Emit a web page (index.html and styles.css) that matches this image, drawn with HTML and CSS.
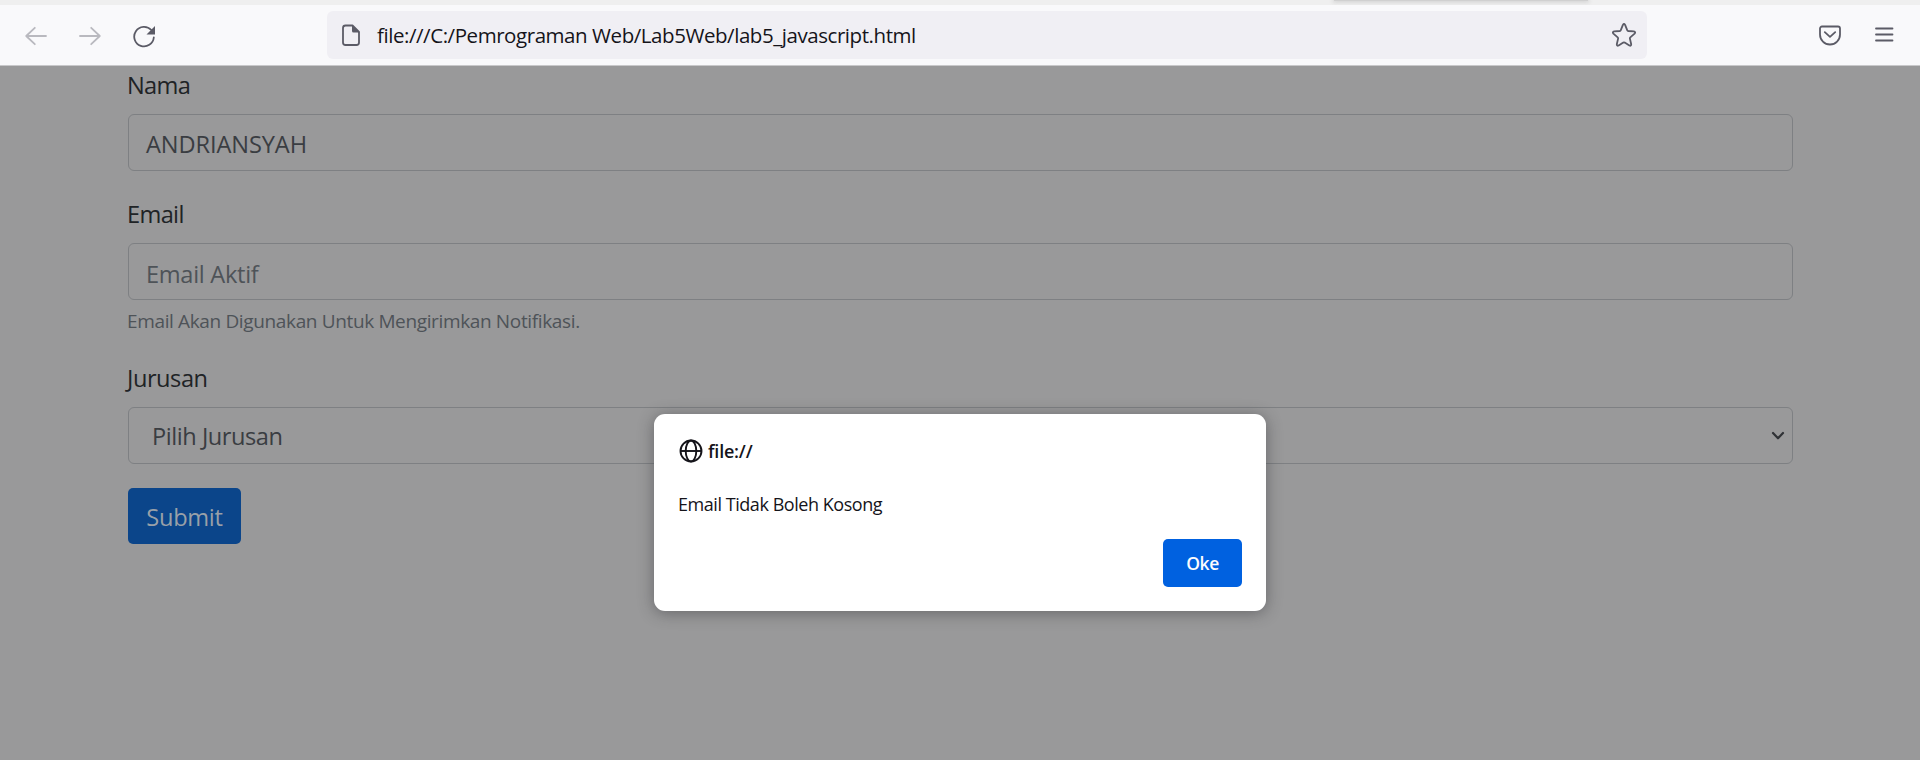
FILE: index.html
```html
<!DOCTYPE html>
<html lang="id">
<head>
<meta charset="utf-8">
<title>lab5_javascript</title>
<link rel="stylesheet" href="styles.css">
</head>
<body>
<header class="chrome">
  <div class="tabstrip"><div class="active-tab"></div></div>
  <nav class="toolbar">
    <div class="nav-buttons">
      <svg class="icon dim" viewBox="0 0 24 24"><path d="M22 12H2.500M10.800 3.800 2.200 12l8.600 8.200"/></svg>
      <svg class="icon dim" viewBox="0 0 24 24"><path d="M2 12h19.500M13.200 3.800 21.800 12l-8.600 8.200"/></svg>
      <svg class="icon" viewBox="0 0 24 24"><path d="M19.300 6A9.800 9.800 0 1 0 21.800 13.500"/><path class="solid" d="M23 2v8.500h-8.500z"/></svg>
    </div>
    <div class="urlbar">
      <svg class="icon" viewBox="0 0 24 24"><path d="M13.500 2.500H6.500a2.500 2.500 0 0 0-2.500 2.500v14.500A2.500 2.500 0 0 0 6.500 22h11a2.500 2.500 0 0 0 2.500-2.500V9z"/><path class="solid" d="M13 2v6a1.500 1.500 0 0 0 1.500 1.500H20.500z"/></svg>
      <span class="url">file:///C:/Pemrograman Web/Lab5Web/lab5_javascript.html</span>
      <svg class="icon" viewBox="0 0 24 24"><path d="M10.900 1.900Q12 .1 13.100 1.900L15.200 7.200Q15.500 7.900 16.300 8L21.800 8.400Q24 8.900 22.600 10.600L18.300 14.400Q17.800 14.900 17.900 15.600L19.200 21.300Q19.200 23.300 17.400 22.500L12.700 19.600Q12 19.200 11.300 19.600L6.600 22.500Q4.800 23.300 4.800 21.300L6.100 15.600Q6.200 14.900 5.700 14.400L1.400 10.600Q0 8.900 2.200 8.400L7.700 8Q8.500 7.900 8.800 7.200Z"/></svg>
    </div>
    <div class="actions">
      <svg class="icon" viewBox="0 0 24 24"><path d="M4 3.500h16a2 2 0 0 1 2 2v6a10 10 0 0 1-20 0v-6a2 2 0 0 1 2-2z"/><path d="m6.800 9.200 5.200 4.600 5.200-4.600"/></svg>
      <svg class="icon" viewBox="0 0 24 24"><path d="M4 5.500h16.500M4 11.500h16.500M4 17.500h16.500"/></svg>
    </div>
  </nav>
</header>
<main class="page">
  <form class="form">
    <div class="group">
      <label class="label tight">Nama</label>
      <div class="control value">ANDRIANSYAH</div>
    </div>
    <div class="group">
      <label class="label tight">Email</label>
      <div class="control placeholder">Email Aktif</div>
      <small class="hint">Email Akan Digunakan Untuk Mengirimkan Notifikasi.</small>
    </div>
    <div class="group">
      <label class="label">Jurusan</label>
      <div class="control select">
        <span>Pilih Jurusan</span>
        <svg class="chevron" viewBox="0 0 14 10"><path d="m2 2 5 5.300L12 2"/></svg>
      </div>
    </div>
    <button type="button" class="submit">Submit</button>
  </form>
</main>
<section class="dialog">
  <div class="origin">
    <svg class="globe" viewBox="0 0 24 24"><circle cx="12" cy="12" r="10.500"/><ellipse cx="12" cy="12" rx="5.300" ry="10.500"/><path d="M1.500 12h21"/></svg>
    <span>file://</span>
  </div>
  <p class="message">Email Tidak Boleh Kosong</p>
  <button type="button" class="ok">Oke</button>
</section>
</body>
</html>
```
FILE: styles.css
```css
* { box-sizing: border-box; }
body {
  margin: 0;
  height: 760px;
  overflow: hidden;
  background: #99999a;
  font-family: "Open Sans", "Noto Sans", sans-serif;
}
button { font-family: inherit; border: 0; padding: 0; }

/* Browser chrome */
.chrome { height: 66px; background: #f9f9fb; border-bottom: 1px solid #c8c8ca; }
.tabstrip { height: 5px; background: #efefef; overflow: hidden; padding-left: 1334px; }
.active-tab { width: 254px; height: 1px; background: #d0d0d0; box-shadow: 0 0 4px 1px #c8c8c8; }
.toolbar { display: flex; height: 60px; padding: 6px 24px 6px; }
.nav-buttons { display: flex; gap: 30px; width: 303px; padding-top: 13px; }
.icon { width: 24px; height: 24px; flex: none; fill: none; stroke: #5b5b66; stroke-width: 1.8; stroke-linecap: round; stroke-linejoin: round; }
.icon .solid { fill: #5b5b66; stroke: none; }
.dim { stroke: #b9b9bf; }
.urlbar { display: flex; align-items: center; width: 1320px; height: 48px; padding: 0 11px 0 12px; border-radius: 6px; background: #f0eff4; }
.url { flex: 1; margin-left: 14px; font-size: 20.5px; letter-spacing: -0.44px; color: #15141a; }
.actions { display: flex; gap: 30px; margin-left: 171px; padding-top: 12px; }

/* Form */
.form { padding: 4px 127px 0 128px; color: #202326; font-size: 23.6px; line-height: 36px; letter-spacing: -0.45px; }
.group { margin-bottom: 28px; }
.group:last-of-type { margin-bottom: 24px; }
.label { display: block; margin: 0 0 8px -1px; line-height: 31px; padding-bottom: 5px; }
.tight { letter-spacing: -0.65px; }
.control { height: 57px; padding: 11px 17px; border: 1px solid #7e8083; border-radius: 6px; color: #3a3d42; }
.value { letter-spacing: -0.1px; }
.placeholder { padding-top: 12px; letter-spacing: -0.3px; color: #4e5358; }
.select { display: flex; justify-content: space-between; align-items: center; padding: 0 7px 0 23px; }
.chevron { width: 14px; height: 10px; fill: none; stroke: #303236; stroke-width: 2.2; stroke-linecap: round; stroke-linejoin: round; }
.hint { display: block; height: 29px; margin: 6px 0 0 -1px; padding-top: 1px; font-size: 19px; line-height: 29px; letter-spacing: -0.36px; color: #4e5358; }
.submit { display: block; width: 113px; height: 56px; border-radius: 5px; background: #0b458a; color: #99a0a8; font-size: 23.6px; letter-spacing: -0.3px; padding-top: 2px; }

/* Alert */
.dialog {
  position: absolute; left: 654px; top: 414px; width: 612px; height: 197px;
  display: flex; flex-direction: column;
  padding: 24px;
  border-radius: 11px; background: #fff; color: #15141a;
  box-shadow: 0 2px 16px rgba(40, 40, 45, 0.45);
  font-size: 18px; letter-spacing: -0.45px;
}
.origin { display: flex; align-items: center; gap: 5px; height: 26px; padding-left: 1px; font-weight: 600; letter-spacing: -0.2px; }
.globe { width: 24px; height: 24px; fill: none; stroke: #15141a; stroke-width: 1.9; }
.message { margin: 27px 0 0; line-height: 26px; }
.ok { align-self: flex-end; width: 79px; height: 48px; margin-top: 22px; border-radius: 5px; background: #0061e0; color: #fbfbfe; font-size: 17.500px; font-weight: 600; letter-spacing: -0.4px; }
```
